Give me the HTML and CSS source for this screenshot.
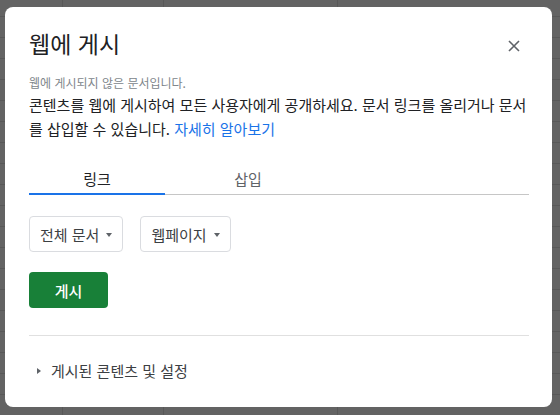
FILE: index.html
```html
<!DOCTYPE html>
<html lang="ko">
<head>
<meta charset="utf-8">
<title>웹에 게시</title>
<link rel="stylesheet" href="styles.css">
</head>
<body>
<div class="dialog">
  <div class="header">
    <h1 class="title">웹에 게시</h1>
    <button class="close" aria-label="닫기">
      <svg width="12" height="12" viewBox="0 0 12 12"><path d="M1 1L11 11M11 1L1 11" stroke="#5f6368" stroke-width="1.6" fill="none"/></svg>
    </button>
  </div>
  <p class="status">웹에 게시되지 않은 문서입니다.</p>
  <p class="desc">콘텐츠를 웹에 게시하여 모든 사용자에게 공개하세요. 문서 링크를 올리거나 문서를 삽입할 수 있습니다. <a class="link" href="#">자세히 알아보기</a></p>
  <div class="tabs">
    <div class="tab tab-active">링크</div>
    <div class="tab tab-second">삽입</div>
  </div>
  <div class="selects">
    <div class="select">전체 문서<span class="caret"></span></div>
    <div class="select">웹페이지<span class="caret"></span></div>
  </div>
  <button class="publish">게시</button>
  <div class="divider"></div>
  <div class="expander"><span class="tri"></span>게시된 콘텐츠 및 설정</div>
</div>
</body>
</html>
```
FILE: styles.css
```css
html, body {
  margin: 0;
  padding: 0;
  min-height: 415px;
}
body {
  font-family: "Noto Sans CJK KR", Roboto, "Noto Sans", sans-serif;
  background-color: #636363;
  background-image:
    linear-gradient(to right, transparent 62px, #585858 62px, #585858 63px, transparent 63px, transparent 163px, #585858 163px, #585858 164px, transparent 164px, transparent 337px, #585858 337px, #585858 338px, transparent 338px),
    repeating-linear-gradient(to bottom, transparent 0, transparent 16px, #585858 16px, #585858 17px, transparent 17px, transparent 21px);
  padding: 7px 0 0 5px;
  box-sizing: border-box;
  height: 415px;
  overflow: hidden;
}
.dialog {
  width: 547px;
  height: 400px;
  box-sizing: border-box;
  background: #fff;
  border-radius: 8px;
  padding: 22px 23px 0 24px;
  display: flex;
  flex-direction: column;
  align-items: stretch;
}
.header {
  display: flex;
  justify-content: space-between;
  align-items: flex-start;
}
.title {
  margin: 0;
  font-size: 23px;
  line-height: 28px;
  font-weight: 400;
  color: #202124;
}
.close {
  border: 0;
  background: none;
  padding: 0;
  width: 24px;
  height: 24px;
  margin-top: 5px;
  margin-right: 3px;
  display: flex;
  align-items: center;
  justify-content: center;
}
.status {
  margin: 17px 0 0;
  font-size: 12px;
  line-height: 16px;
  color: #80868b;
}
.desc {
  margin: 2px 0 0;
  font-size: 15px;
  line-height: 24px;
  color: #202124;
}
.link {
  color: #1a73e8;
  text-decoration: none;
}
.tabs {
  margin-top: 18px;
  display: flex;
  border-bottom: 1px solid #c6c6c6;
}
.tab {
  width: 136px;
  padding-top: 6px;
  line-height: 28px;
  font-size: 15px;
  text-align: center;
  color: #5f6368;
  border-bottom: 2px solid transparent;
  margin-bottom: -1px;
}
.tab-second {
  width: 166px;
}
.tab-active {
  color: #202124;
  border-bottom-color: #1a73e8;
}
.selects {
  margin-top: 21px;
  display: flex;
  gap: 17px;
}
.select {
  height: 36px;
  box-sizing: border-box;
  border: 1px solid #dadce0;
  border-radius: 4px;
  padding: 0 10px 0 10px;
  display: flex;
  align-items: center;
  gap: 7px;
  font-size: 15px;
  color: #3c4043;
}
.caret {
  width: 0;
  height: 0;
  border-left: 3.5px solid transparent;
  border-right: 3.5px solid transparent;
  border-top: 4px solid #5f6368;
  margin-top: 1px;
}
.publish {
  margin-top: 20px;
  align-self: flex-start;
  width: 79px;
  height: 36px;
  border: 0;
  border-radius: 4px;
  background: #188038;
  color: #fff;
  font-family: inherit;
  font-size: 15px;
  font-weight: 500;
  padding: 0;
}
.divider {
  margin-top: 27px;
  height: 1px;
  background: #e0e0e0;
}
.expander {
  margin-top: 25px;
  padding-left: 8px;
  display: flex;
  align-items: center;
  gap: 10px;
  font-size: 15px;
  line-height: 20px;
  color: #3c4043;
}
.tri {
  width: 0;
  height: 0;
  border-top: 3px solid transparent;
  border-bottom: 3px solid transparent;
  border-left: 4px solid #5f6368;
}
```
